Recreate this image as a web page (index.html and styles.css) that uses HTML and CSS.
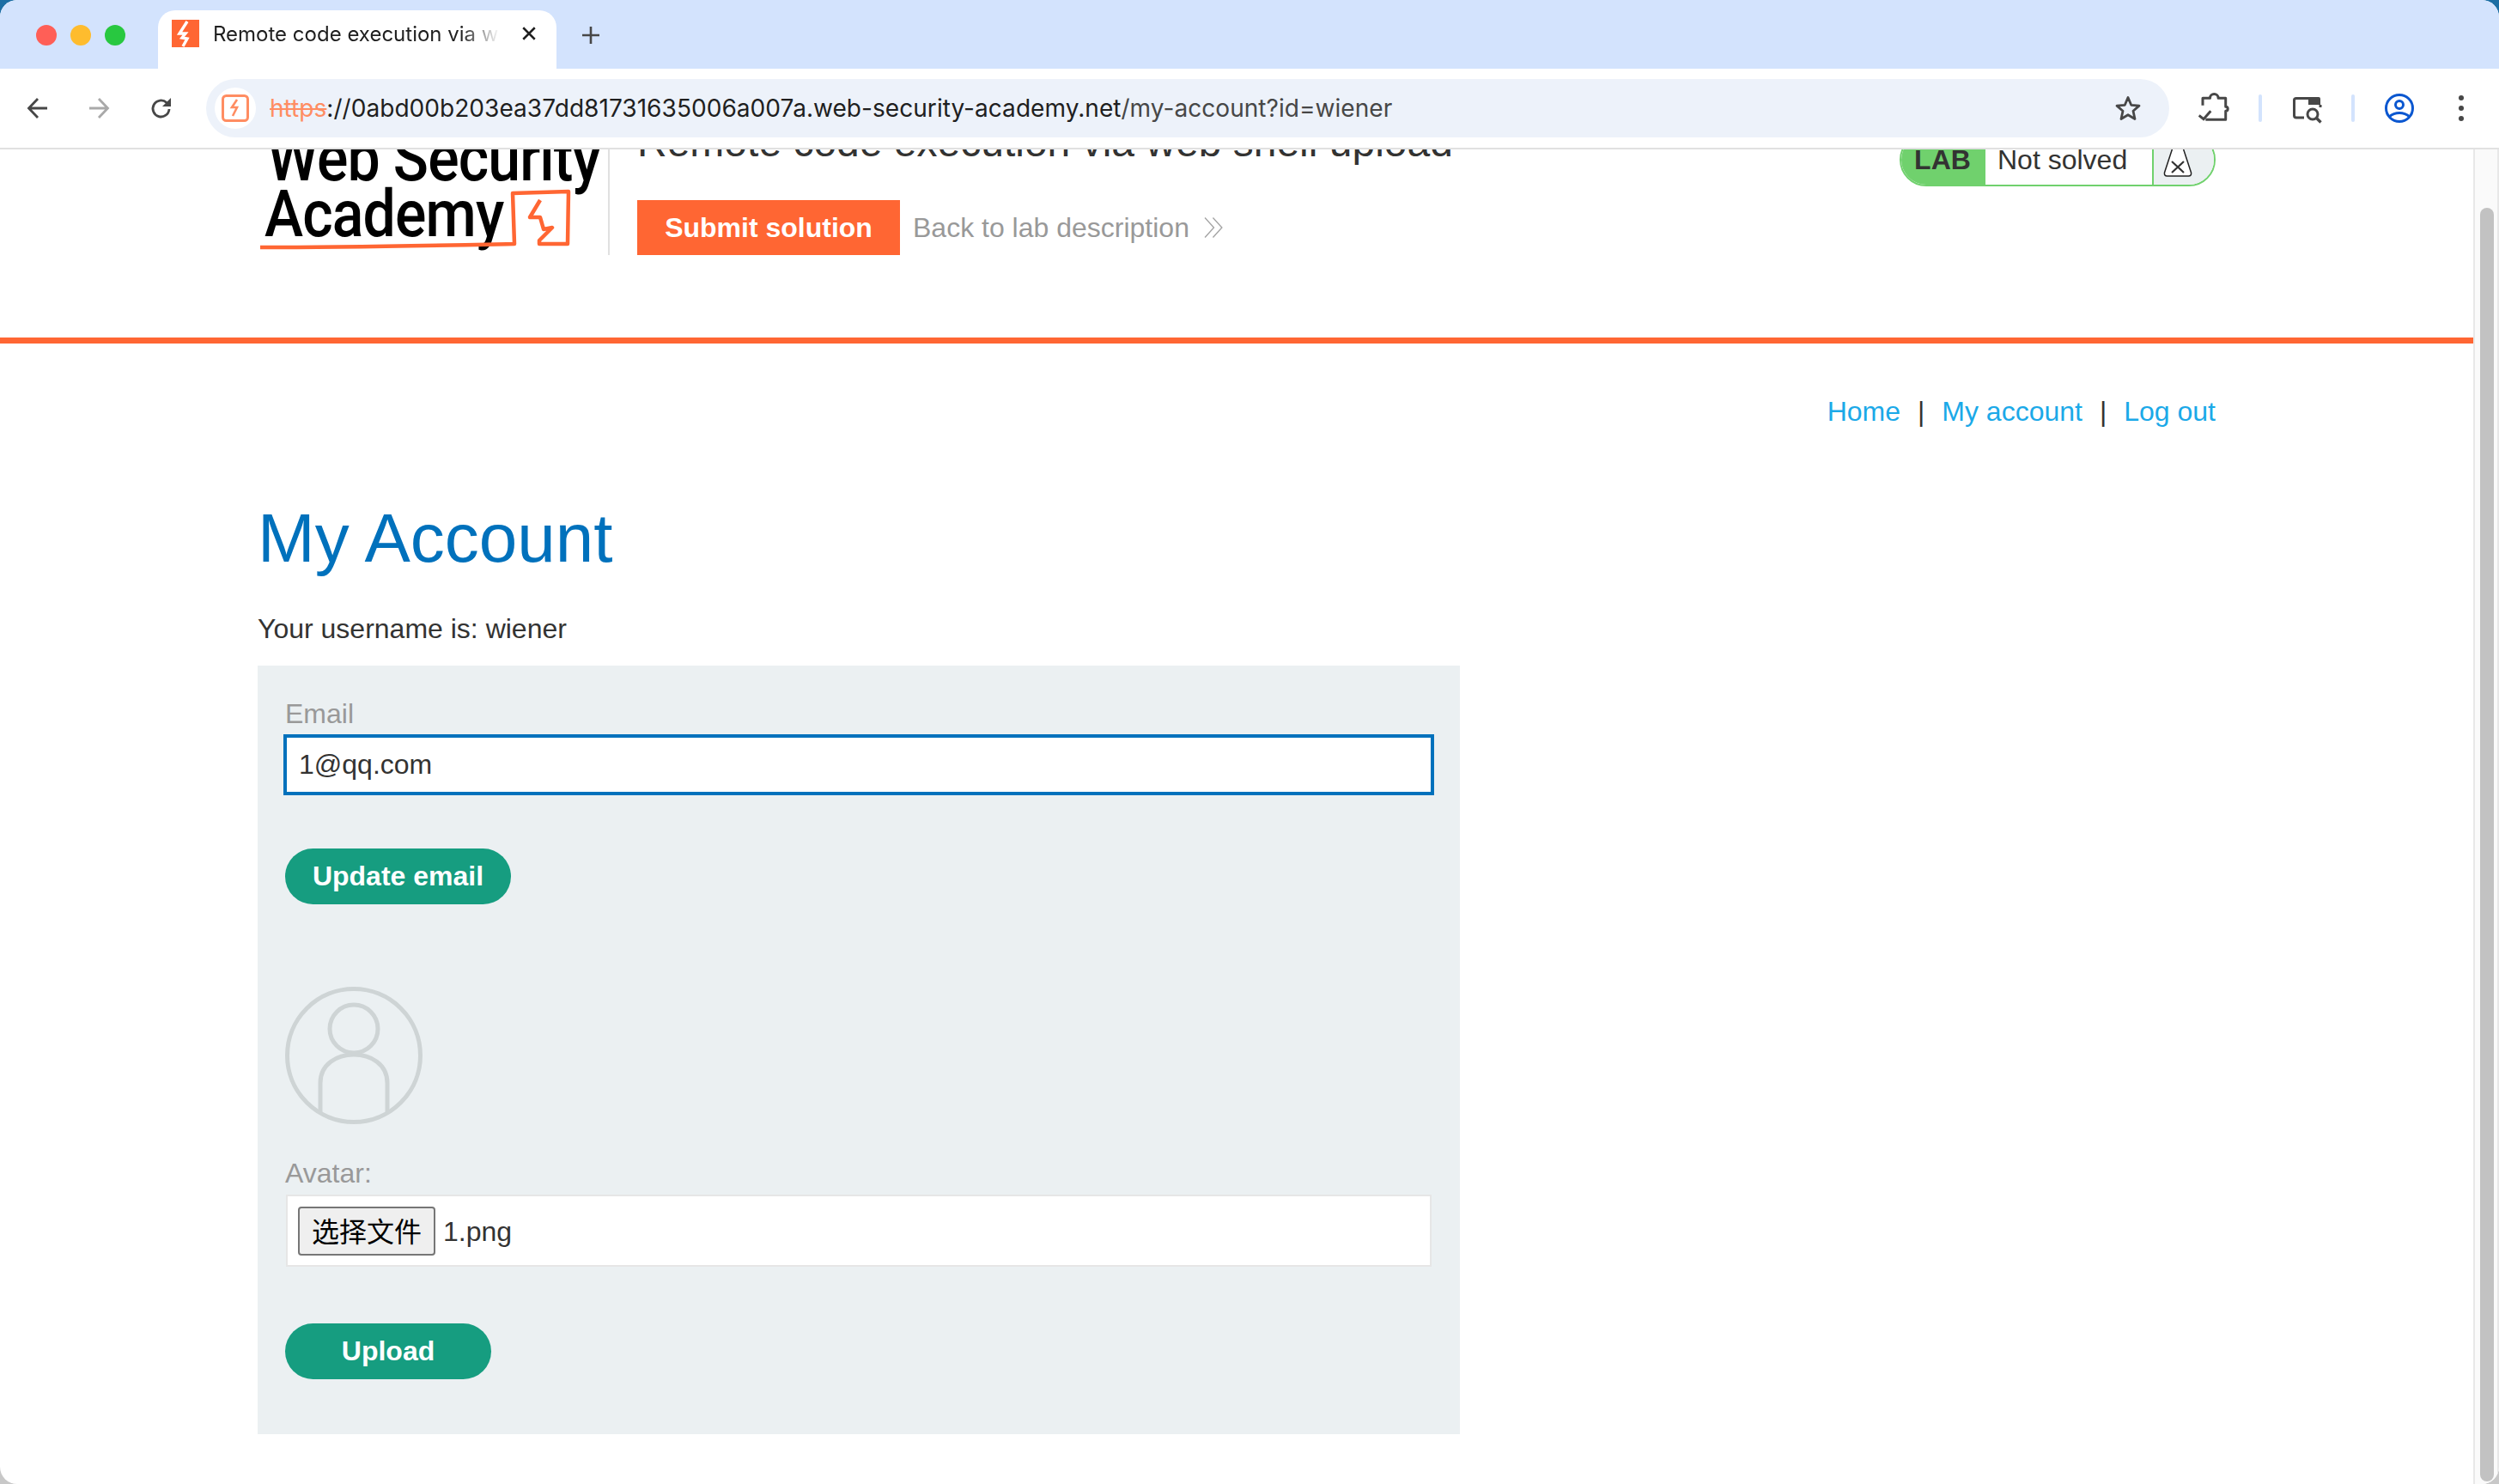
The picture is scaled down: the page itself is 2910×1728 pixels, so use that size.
FILE: index.html
```html
<!DOCTYPE html>
<html lang="en">
<head>
<meta charset="utf-8">
<title>Remote code execution via web shell upload</title>
<link rel="stylesheet" href="styles.css">
</head>
<body>
<div class="window">
  <div class="tabstrip">
    <div class="lights"><span class="light red"></span><span class="light yellow"></span><span class="light green"></span></div>
    <div class="tab">
      <svg class="favicon" viewBox="0 0 32 32"><rect width="32" height="32" fill="#ff6633"/><path d="M18 2 9 16h7l-4 5 6 1-5 9" fill="none" stroke="#fff" stroke-width="3.4"/></svg>
      <span class="tab-title">Remote code execution via web shell upload</span>
      <svg class="tab-close" viewBox="0 0 16 16"><path d="M2 2 14 14M14 2 2 14" stroke="#1f1f1f" stroke-width="2.2"/></svg>
    </div>
    <svg class="newtab" viewBox="0 0 22 22"><path d="M11 1v20M1 11h20" stroke="#474747" stroke-width="2.6"/></svg>
  </div>
  <div class="toolbar">
    <svg class="nav nav-back" viewBox="0 0 28 28"><path d="M25 14H4M14 3 3.500 14 14 25" fill="none" stroke="#474747" stroke-width="2.800"/></svg>
    <svg class="nav nav-forward" viewBox="0 0 28 28"><path d="M3 14h21M14 3l10.500 11L14 25" fill="none" stroke="#a9a9a9" stroke-width="2.800"/></svg>
    <svg class="nav nav-reload" viewBox="0 0 28 28"><path d="M23 15a9.500 9.500 0 1 1-3-7.500L24 11" fill="none" stroke="#474747" stroke-width="2.800"/><path d="M25 2v10H15z" fill="#474747"/></svg>
    <div class="omnibox">
      <span class="site-chip"><svg class="site-icon" viewBox="0 0 32 32"><rect x="1.500" y="1.500" width="29" height="29" rx="4" fill="none" stroke="#ff8d62" stroke-width="3"/><path d="M18 6 12 15h6l-5 10" fill="none" stroke="#ff8d62" stroke-width="2.600"/></svg></span>
      <span class="url"><s class="scheme">https</s>://0abd00b203ea37dd81731635006a007a.web-security-academy.net<span class="url-path">/my-account?id=wiener</span></span>
      <svg class="star" viewBox="0 0 32 32"><path d="M16 3.500 19.700 12.300 29 13.100 22 19.300 24 28.500 16 23.700 8 28.500 10 19.300 3 13.100 12.300 12.300Z" fill="none" stroke="#474747" stroke-width="2.800" stroke-linejoin="round"/></svg>
    </div>
    <div class="tools">
      <svg class="tool puzzle" viewBox="0 0 36 36"><path d="M5 14.700V6.300h8.500a4.800 4.800 0 0 1 9.600 0h8.600v10a2.500 2.500 0 0 1 0 5v10H8.300" fill="none" stroke="#474747" stroke-width="3" stroke-linejoin="round"/><path d="M.7 26.300 6 30.700l8.300-9.400" fill="none" stroke="#474747" stroke-width="3"/></svg>
      <span class="tool-sep"></span>
      <svg class="tool lens" viewBox="0 0 36 36"><path d="M15 29H6q-2.500 0-2.500-2.500v-18Q3.500 6.500 6 6.500h14" fill="none" stroke="#474747" stroke-width="3"/><path d="M20 5h12q2 0 2 2v7H20z" fill="#474747"/><path d="M34 14v3" stroke="#474747" stroke-width="3"/><circle cx="25" cy="25" r="6" fill="none" stroke="#474747" stroke-width="3"/><path d="m29.500 29.500 5 5" stroke="#474747" stroke-width="3.400"/></svg>
      <span class="tool-sep"></span>
      <svg class="tool avatar-btn" viewBox="0 0 36 36"><circle cx="18" cy="18" r="15.500" fill="none" stroke="#0b57d0" stroke-width="3"/><circle cx="18" cy="14" r="4.500" fill="none" stroke="#0b57d0" stroke-width="3"/><path d="M6 28c7-6 17-6 24 0" fill="none" stroke="#0b57d0" stroke-width="3"/></svg>
      <svg class="tool kebab" viewBox="0 0 8 32"><circle cx="4" cy="4" r="3"/><circle cx="4" cy="16" r="3"/><circle cx="4" cy="28" r="3"/></svg>
    </div>
  </div>
  <div class="viewport">
    <div class="scroller">
      <div class="page">
        <header class="lab-header">
          <div class="logo">
            <span class="logo-line logo-first">Web Security</span>
            <span class="logo-line logo-second">Academy</span>
            <svg class="logo-mark" viewBox="0 0 400 90"><path d="M3 71C110 71 200 69 299 67L297 8 362 6 361 67H328V63L343 48 333 50 329 36 317 36 329 16" fill="none" stroke="#ff6633" stroke-width="4.500" stroke-linejoin="round"/></svg>
          </div>
          <div class="lab-main">
            <h2 class="lab-title">Remote code execution via web shell upload</h2>
            <div class="lab-actions">
              <button class="submit-btn" type="button">Submit solution</button>
              <a class="back-link">Back to lab description</a>
              <svg class="back-icon" viewBox="0 0 24 24"><path d="M2 1l10 11L2 23M11 1l10 11-10 11" fill="none" stroke="#a3a3a3" stroke-width="1.300"/></svg>
            </div>
          </div>
          <div class="status">
            <span class="status-lab">LAB</span>
            <span class="status-text">Not solved</span>
            <span class="status-icon"><svg viewBox="0 0 34 46"><path d="M11 0v12L1.500 41q-.5 4 3 4h25q3.500 0 3-4L23 12V0" fill="#fff" stroke="#222" stroke-width="1.500"/><path d="M10 28 24 41M24 28 10 41" stroke="#333" stroke-width="2.200"/></svg></span>
          </div>
        </header>
        <main class="content">
          <nav class="links"><a>Home</a><span class="bar">|</span><a>My account</a><span class="bar">|</span><a>Log out</a></nav>
          <h1 class="heading">My Account</h1>
          <p class="username">Your username is: wiener</p>
          <section class="panel">
            <form class="form-email">
              <label class="field-label" for="email">Email</label>
              <input class="email-input" id="email" type="text" value="1@qq.com">
              <button class="pill-btn update-btn" type="button">Update email</button>
            </form>
            <svg class="avatar" viewBox="0 0 160 160"><circle cx="80" cy="80" r="77.500" fill="none" stroke="#ced4d5" stroke-width="5"/><circle cx="80" cy="49" r="28" fill="none" stroke="#ced4d5" stroke-width="5"/><path d="M41 146V112c0-44 78-44 78 0v34" fill="none" stroke="#ced4d5" stroke-width="5"/></svg>
            <label class="field-label avatar-label">Avatar:</label>
            <div class="file-box"><span class="file-btn"><span class="file-btn-text">选择文件</span></span><span class="file-name">1.png</span></div>
            <button class="pill-btn upload-btn" type="button">Upload</button>
          </section>
        </main>
      </div>
    </div>
    <div class="scrollbar"><div class="thumb"></div></div>
  </div>
</div>
</body>
</html>
```

FILE: styles.css
```css
* { box-sizing: border-box; }
html, body { margin: 0; padding: 0; height: 100%; }
body { background: linear-gradient(#1c6ea4 0, #1c6ea4 50%, #c8c8c8 50%); font-family: "Liberation Sans", Arial, sans-serif; color: #333332; overflow: hidden; }
.window { width: 2910px; height: 1728px; background: #fff; border-radius: 20px; overflow: hidden; display: flex; flex-direction: column; }

.tabstrip { height: 80px; background: #d3e3fd; display: flex; align-items: flex-end; flex: none; }
.lights { display: flex; gap: 16px; width: 184px; padding-left: 42px; align-self: flex-start; padding-top: 29px; }
.light { width: 24px; height: 24px; border-radius: 50%; }
.red { background: #ff5f57; }
.yellow { background: #febc2e; }
.green { background: #28c840; }
.tab { width: 464px; height: 68px; background: #fff; border-radius: 20px 20px 0 0; display: flex; align-items: center; padding: 0 24px 14px 16px; }
.favicon { width: 32px; height: 32px; flex: none; }
.tab-title { font-family: Inter, sans-serif; font-size: 24px; color: #1f1f1f; margin-left: 16px; width: 344px; flex: none; white-space: nowrap; overflow: hidden; -webkit-mask-image: linear-gradient(90deg, #000 84%, transparent 97%); mask-image: linear-gradient(90deg, #000 84%, transparent 97%); }
.tab-close { width: 18px; height: 18px; margin-left: 15px; flex: none; }
.newtab { width: 22px; height: 22px; margin: 0 0 28px 29px; }

.toolbar { height: 94px; flex: none; display: flex; align-items: center; background: #fff; border-bottom: 2px solid #e1e1e1; border-radius: 24px 24px 0 0; }
.nav { width: 28px; height: 28px; flex: none; }
.nav-back { margin-left: 30px; }
.nav-forward { margin-left: 43px; }
.nav-reload { margin-left: 45px; }
.omnibox { margin-left: 38px; width: 2286px; height: 68px; background: #edf2fa; border-radius: 34px; display: flex; align-items: center; padding-left: 10px; flex: none; }
.site-chip { width: 48px; height: 48px; background: #fff; border-radius: 50%; display: flex; align-items: center; justify-content: center; flex: none; }
.site-icon { width: 32px; height: 32px; }
.url { font-family: Inter, sans-serif; font-size: 28.1px; color: #1f1f1f; margin-left: 16px; white-space: nowrap; flex: 1; }
.scheme { color: #ff8d62; }
.url-path { color: #474747; }
.star { width: 32px; height: 32px; margin-right: 32px; flex: none; }
.tools { display: flex; align-items: center; flex: none; margin-left: 34px; }
.tool { flex: none; }
.puzzle { width: 36px; height: 36px; }
.tool-sep { width: 4px; height: 32px; background: #d3e3fd; border-radius: 2px; margin: 0 34px; }
.lens { width: 36px; height: 36px; }
.avatar-btn { width: 36px; height: 36px; }
.kebab { width: 8px; height: 32px; margin-left: 50px; fill: #474747; }

.viewport { flex: 1; min-height: 0; display: flex; }
.scroller { flex: 1; min-width: 0; overflow: hidden; }
.page { margin-top: -60px; }
.scrollbar { width: 30px; flex: none; background: #fafafa; border-left: 2px solid #e8e8e8; border-right: 2px solid #e8e8e8; padding: 68px 4px 3px 6px; }
.thumb { height: 100%; background: #c2c2c2; border-radius: 8px; }

.lab-header { height: 286px; border-bottom: 7px solid #ff6633; display: flex; padding: 0 300px; position: relative; }
.logo { width: 410px; height: 183px; border-right: 2px solid #e0e0e0; position: relative; flex: none; font-family: Roboto, sans-serif; color: #000; }
.logo-line { display: block; font-size: 76px; line-height: 65px; font-weight: 500; letter-spacing: -1px; white-space: nowrap; transform: scaleX(0.895); transform-origin: 0 0; }
.logo-first { margin: 38px 0 0 11px; }
.logo-second { margin-left: 8px; }
.logo-mark { position: absolute; left: 0; top: 103px; width: 400px; height: 90px; }
.lab-main { padding-left: 32px; flex: 1; }
.lab-title { font-size: 48px; font-weight: 400; margin: 0; line-height: 60px; padding-top: 22px; white-space: nowrap; }
.lab-actions { display: flex; align-items: center; margin-top: 37px; }
.submit-btn { width: 306px; height: 64px; background: #ff6633; border: 0; color: #fff; font: 700 32px "Liberation Sans", sans-serif; padding: 0; }
.back-link { font-size: 32px; color: #999; margin-left: 15px; }
.back-icon { width: 25px; height: 26px; margin-left: 16px; }
.status { width: 368px; height: 62px; margin-top: 41px; display: flex; border: 2px solid #70d16d; border-radius: 31px; overflow: hidden; flex: none; background: #fff; }
.status-lab { width: 98px; background: #70d16d; font-weight: 700; font-size: 32px; display: flex; align-items: center; justify-content: center; flex: none; padding-right: 2px; }
.status-text { flex: 1; font-size: 32px; display: flex; align-items: center; padding-left: 14px; }
.status-icon { width: 72px; flex: none; background: #ebf0f2; border-left: 2px solid #70d16d; display: flex; align-items: center; justify-content: center; padding-right: 14px; }
.status-icon svg { width: 34px; height: 46px; margin-bottom: 6px; }

.content { padding: 0 300px; }
.links { display: flex; justify-content: flex-end; align-items: center; font-size: 32px; height: 42px; margin-top: 58px; white-space: nowrap; }
.links a { color: #1ba9e8; }
.bar { margin: 0 20px; color: #333332; }
.heading { font-size: 80px; font-weight: 400; color: #0071bc; margin: 82px 0 0; line-height: 90px; }
.username { font-size: 32px; line-height: 40px; margin: 40px 0 0; }
.panel { width: 1400px; height: 895px; margin-top: 23px; background: #ebf0f2; padding: 0 31px 0 32px; display: flex; flex-direction: column; align-items: flex-start; }
.form-email { display: flex; flex-direction: column; align-items: flex-start; width: 100%; }
.field-label { font-size: 32px; line-height: 38px; color: #999; }
.form-email .field-label { margin-top: 37px; }
.email-input { width: 1340px; height: 71px; margin-top: 5px; margin-left: -2px; border: 4px solid #0071bc; padding: 0 14px; font: 32px "Liberation Sans", sans-serif; color: #333332; background: #fff; outline: 0; }
.pill-btn { height: 65px; border: 0; border-radius: 33px; background: #169d80; color: #fff; font: 700 32px "Liberation Sans", sans-serif; padding: 0; }
.update-btn { width: 263px; margin-top: 62px; }
.avatar { width: 160px; height: 160px; margin-top: 96px; }
.avatar-label { margin-top: 38px; color: #999; }
.file-box { width: 1334px; height: 84px; margin-top: 6px; margin-left: 1px; background: #fff; border: 2px solid #e6e6e6; display: flex; align-items: center; padding-left: 12px; }
.file-btn { width: 160px; height: 57px; background: #efefef; border: 2px solid #767676; border-radius: 4px; font: 32px "Noto Sans CJK SC", sans-serif; color: #000; display: flex; align-items: center; justify-content: center; flex: none; padding-bottom: 2px; }
.file-name { font-size: 32px; margin-left: 9px; padding-top: 2px; }
.upload-btn { width: 240px; margin-top: 66px; }
```
